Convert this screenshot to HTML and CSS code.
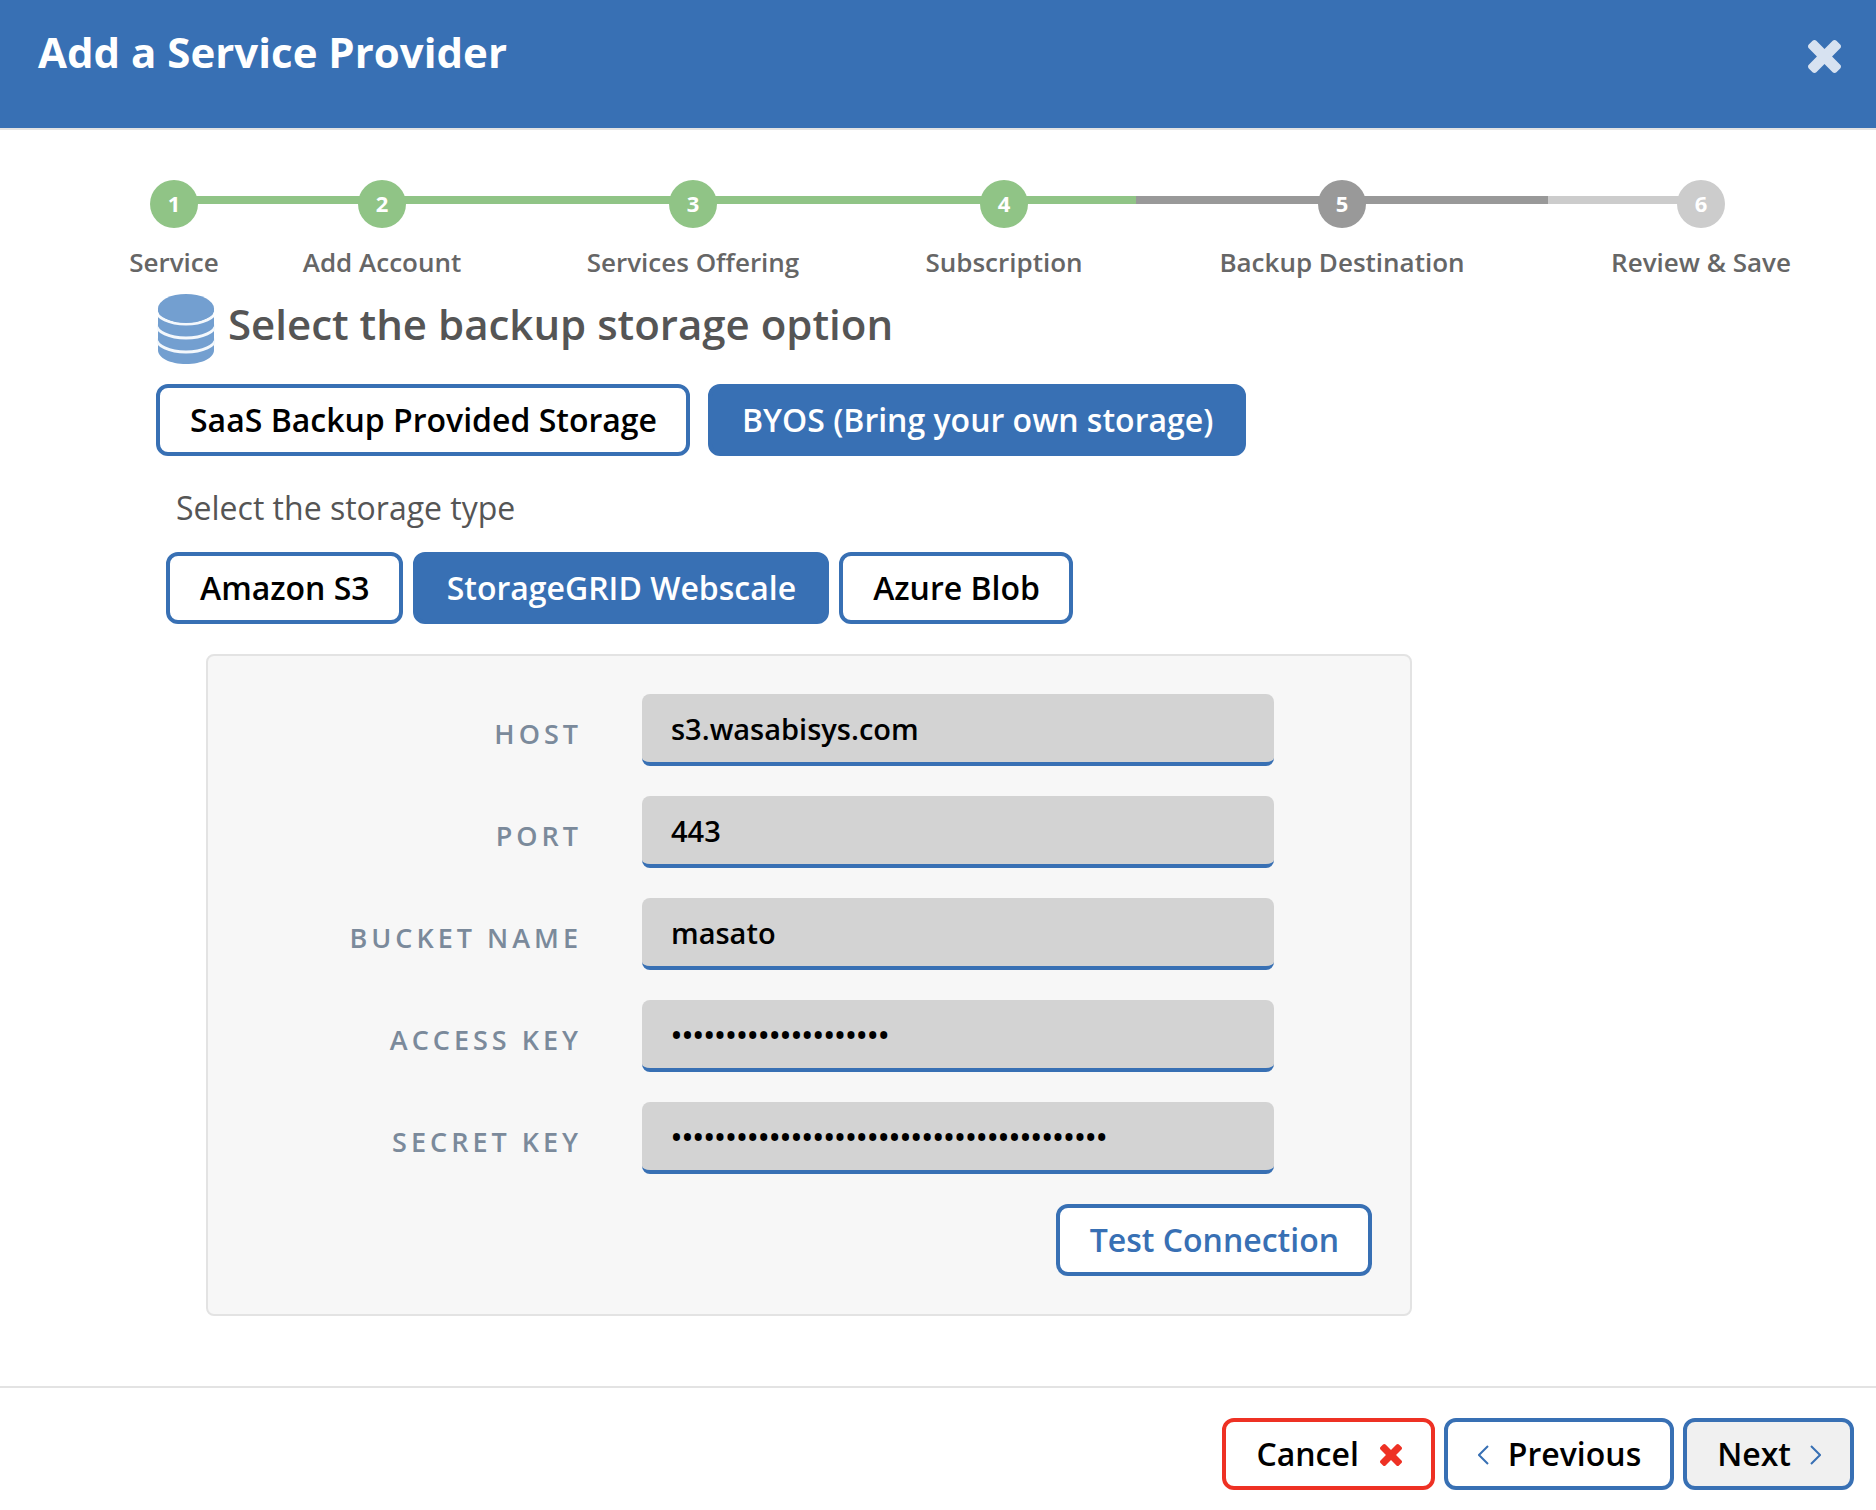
FILE: index.html
```html
<!DOCTYPE html>
<html lang="en">
<head>
  <meta charset="utf-8">
  <meta name="viewport" content="width=device-width, initial-scale=1">
  <title>Add a Service Provider</title>
  <link rel="stylesheet" href="styles.css">
</head>
<body>
  <svg class="sprite" aria-hidden="true">
    <symbol id="times" viewBox="110 366 1188 1188">
      <path d="M1298 1322q0 40-28 68l-136 136q-28 28-68 28t-68-28l-294-294-294 294q-28 28-68 28t-68-28l-136-136q-28-28-28-68t28-68l294-294-294-294q-28-28-28-68t28-68l136-136q28-28 68-28t68 28l294 294 294-294q28-28 68-28t68 28l136 136q28 28 28 68t-28 68l-294 294 294 294q28 28 28 68z"/>
    </symbol>
  </svg>

  <header class="header">
    <h1 class="title">Add a Service Provider</h1>
    <button class="close" type="button" aria-label="Close"><svg class="close-icon"><use href="#times"/></svg></button>
  </header>

  <main class="main">
    <ol class="steps">
      <li class="step done"><span class="dot">1</span><span class="step-name">Service</span></li>
      <li class="step done"><span class="dot">2</span><span class="step-name">Add Account</span></li>
      <li class="step done"><span class="dot">3</span><span class="step-name">Services Offering</span></li>
      <li class="step done"><span class="dot">4</span><span class="step-name">Subscription</span></li>
      <li class="step current" aria-current="step"><span class="dot">5</span><span class="step-name">Backup Destination</span></li>
      <li class="step"><span class="dot">6</span><span class="step-name">Review &amp; Save</span></li>
    </ol>

    <div class="content">
      <h2 class="heading">
        <svg class="db-icon" viewBox="0 0 58 70" aria-hidden="true">
          <path d="M1 15v41c0 8 12 14 28 14s28-6 28-14V15z"/>
          <path class="db-line" d="M-1 16a30 14 0 0 0 60 0M-1 30a30 14 0 0 0 60 0M-1 44a30 14 0 0 0 60 0"/>
          <path class="db-gap" d="M0 14v8l3 2zM58 14v8l-3 2z"/>
          <ellipse cx="29" cy="14.500" rx="28" ry="14.500"/>
        </svg>
        Select the backup storage option
      </h2>

      <div class="options">
        <button class="btn" type="button" aria-pressed="false">SaaS Backup Provided Storage</button>
        <button class="btn selected" type="button" aria-pressed="true">BYOS (Bring your own storage)</button>
      </div>

      <p class="hint">Select the storage type</p>

      <div class="types">
        <button class="btn" type="button" aria-pressed="false">Amazon S3</button>
        <button class="btn selected" type="button" aria-pressed="true">StorageGRID Webscale</button>
        <button class="btn" type="button" aria-pressed="false">Azure Blob</button>
      </div>

      <form class="panel">
        <div class="field"><label for="host">Host</label><input id="host" type="text" value="s3.wasabisys.com"></div>
        <div class="field"><label for="port">Port</label><input id="port" type="text" value="443"></div>
        <div class="field"><label for="bucket">Bucket name</label><input id="bucket" type="text" value="masato"></div>
        <div class="field"><label for="access">Access key</label><input id="access" type="password" value="AAAAAAAAAAAAAAAAAAAA"></div>
        <div class="field"><label for="secret">Secret key</label><input id="secret" type="password" value="AAAAAAAAAAAAAAAAAAAAAAAAAAAAAAAAAAAAAAAA"></div>
        <button class="btn test" type="button">Test Connection</button>
      </form>
    </div>
  </main>

  <footer class="footer">
    <button class="btn cancel" type="button">Cancel <svg class="times-icon" aria-hidden="true"><use href="#times"/></svg></button>
    <button class="btn previous" type="button"><svg class="chevron" viewBox="0 0 11 20" aria-hidden="true"><path d="m10 1-9 9 9 9"/></svg> Previous</button>
    <button class="btn next" type="button">Next <svg class="chevron" viewBox="0 0 11 20" aria-hidden="true"><path d="m1 1 9 9-9 9"/></svg></button>
  </footer>
</body>
</html>
```

FILE: styles.css
```css
:root {
  --blue: #3870b4;
  --green: #90c486;
  --line: #e3e3e3;
}

* { box-sizing: border-box; }

body {
  margin: 0;
  min-height: 100vh;
  display: flex;
  flex-direction: column;
  background: #fff;
  color: #555;
  font-family: "Open Sans", "Noto Sans", sans-serif;
  font-size: 32px;
  line-height: 44px;
}

.sprite { display: none; }

button, input { font: inherit; }

.header {
  display: flex;
  justify-content: space-between;
  align-items: flex-start;
  height: 130px;
  padding: 24px 35px 0 38px;
  background: var(--blue);
  border-bottom: 2px solid var(--line);
}

.title {
  margin: 0;
  color: #fff;
  font-size: 42px;
  font-weight: 700;
  line-height: 56px;
}

.close {
  display: flex;
  margin-top: 16px;
  padding: 0;
  border: 0;
  background: none;
  cursor: pointer;
}

.close-icon {
  width: 33px;
  height: 33px;
  fill: #d7e2f1;
}

.main {
  flex: 1;
  padding: 50px 22px 0 98px;
}

.steps {
  display: grid;
  grid-template-columns: 152fr 264fr 358fr 264fr 412fr 306fr;
  margin: 0;
  padding: 0;
  list-style: none;
}

.step {
  --step: #ccc;
  display: flex;
  flex-direction: column;
  align-items: center;
  gap: 16px;
  background: linear-gradient(var(--step), var(--step)) 0 16px / 100% 8px no-repeat;
}

.step:first-child { background-position: 100% 16px; }
.step:first-child, .step:last-child { background-size: 50% 8px; }
.done { --step: var(--green); }
.current { --step: #999; }

.dot {
  width: 48px;
  height: 48px;
  border-radius: 50%;
  background: var(--step);
  color: #fff;
  font-size: 22px;
  font-weight: 700;
  line-height: 46px;
  text-align: center;
}

.step-name {
  color: #666;
  font-size: 26px;
  font-weight: 600;
  line-height: 36px;
  white-space: nowrap;
}

.content { padding-left: 58px; }

.heading {
  display: flex;
  align-items: flex-start;
  gap: 13px;
  margin: 14px 0 20px 1px;
  font-size: 42px;
  font-weight: 600;
  line-height: 60px;
}

.db-icon {
  width: 58px;
  height: 70px;
  fill: #739fd0;
}

.db-icon .db-gap { fill: #fff; }

.db-icon .db-line {
  fill: none;
  stroke: #f4f8fc;
  stroke-width: 3;
}

.btn {
  height: 72px;
  padding: 0 29px 0 30px;
  border: 4px solid var(--blue);
  border-radius: 12px;
  background: #fff;
  color: #000;
  font-weight: 600;
  white-space: nowrap;
  cursor: pointer;
}

.selected {
  background: var(--blue);
  color: #fff;
}

.options { display: flex; gap: 18px; }

.hint { margin: 30px 20px 22px; }

.types {
  display: flex;
  gap: 10px;
  margin: 0 10px 30px;
}

.panel {
  display: flex;
  flex-direction: column;
  gap: 30px;
  max-width: 1206px;
  margin: 0 50px 70px;
  padding: 38px;
  border: 2px solid var(--line);
  border-radius: 8px;
  background: #f7f7f7;
}

.field {
  display: grid;
  grid-template-columns: 336fr 632fr;
  gap: 60px;
  padding-right: 98px;
}

.field label {
  padding-top: 16px;
  color: #7b8a9b;
  font-size: 27px;
  font-weight: 600;
  line-height: 48px;
  letter-spacing: 4px;
  text-align: right;
  text-transform: uppercase;
}

.field input {
  width: 100%;
  height: 72px;
  padding: 0 30px 0 29px;
  border: 0;
  border-bottom: 4px solid var(--blue);
  border-radius: 8px;
  background: #d3d3d3;
  color: #000;
  font-size: 29px;
  font-weight: 600;
}

.test {
  align-self: flex-end;
  color: var(--blue);
}

.footer {
  display: flex;
  justify-content: flex-end;
  gap: 9px;
  padding: 30px 22px 20px;
  border-top: 2px solid var(--line);
}

.footer .btn {
  display: flex;
  align-items: center;
}

.cancel {
  gap: 21px;
  border-color: #ee3124;
}

.previous, .next { gap: 19px; }
.next { background: #f0f0f0; }

.times-icon {
  width: 22px;
  height: 22px;
  margin-top: 2px;
  fill: #ee3124;
}

.chevron {
  width: 11px;
  height: 20px;
  margin-top: 2px;
  fill: none;
  stroke: var(--blue);
  stroke-width: 2;
}
```
